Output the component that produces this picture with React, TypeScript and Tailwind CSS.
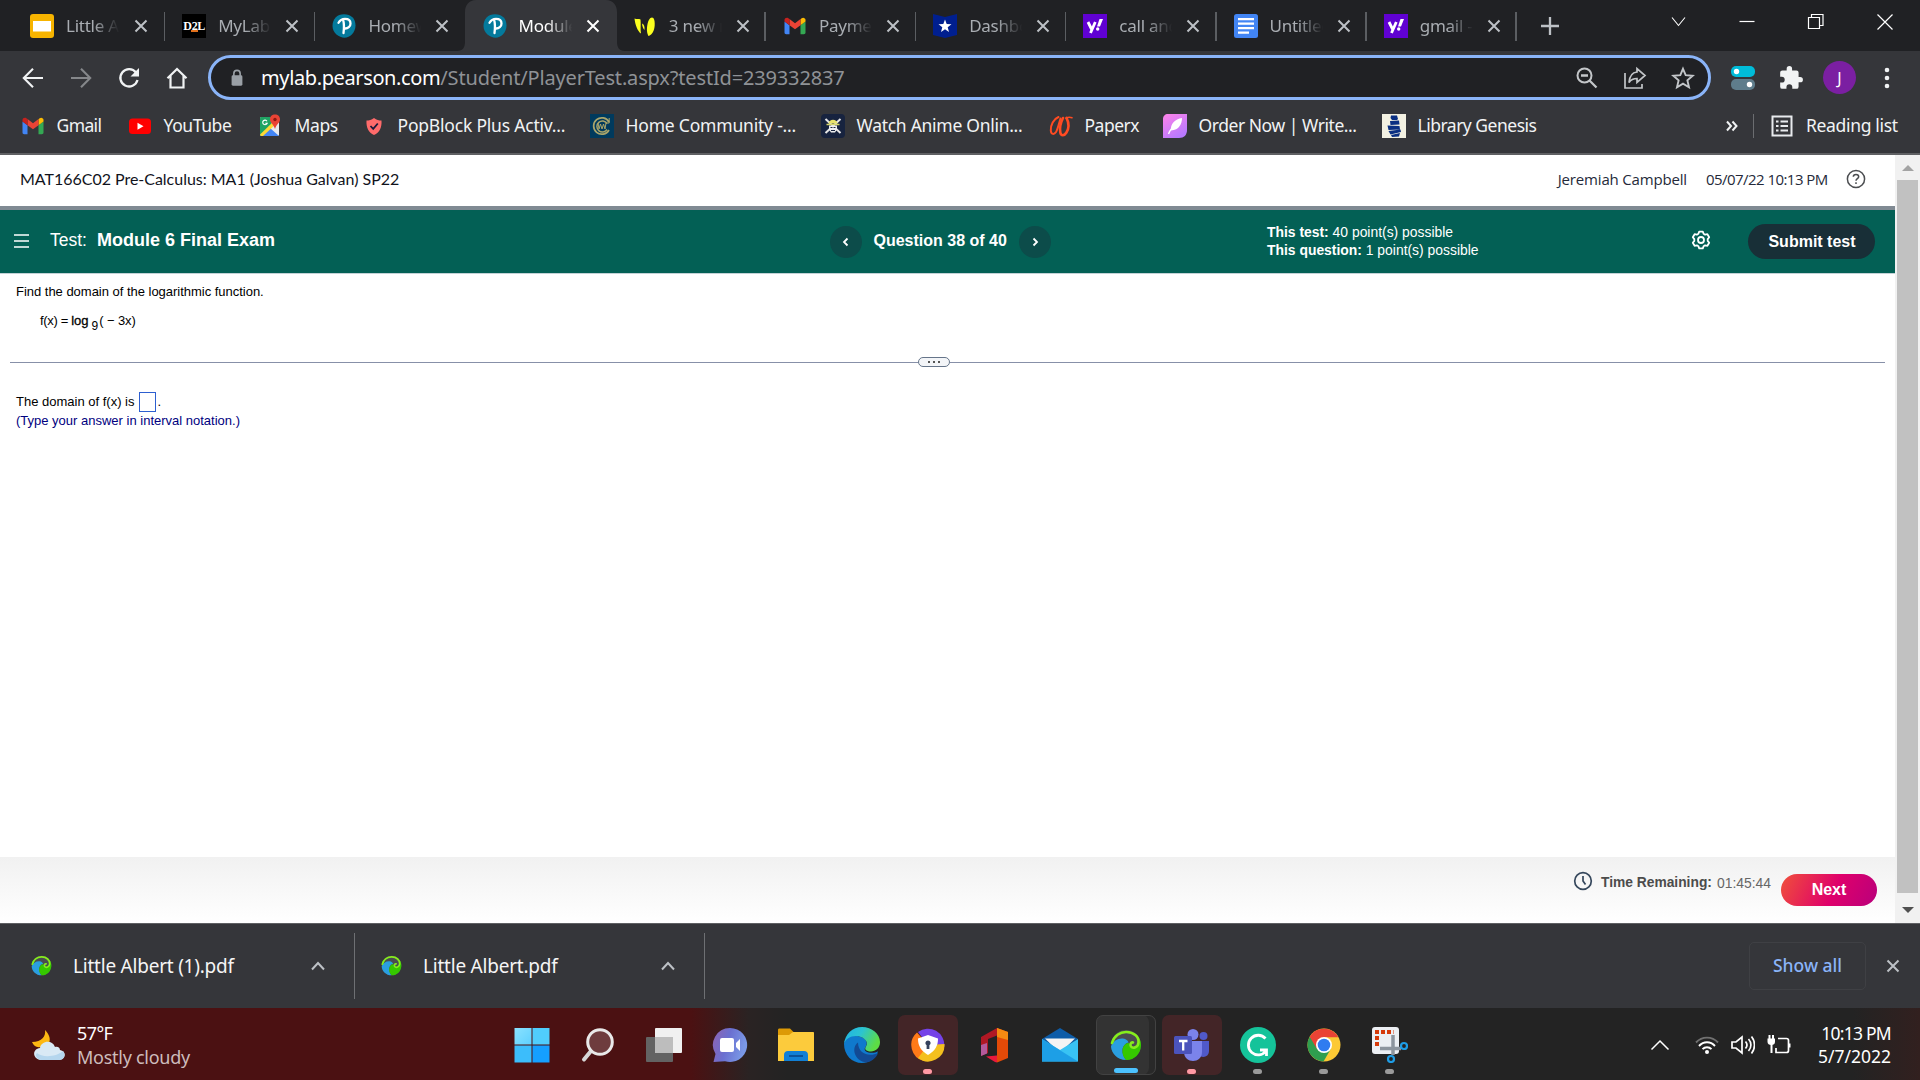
import React from 'react';

type IconProps = { className?: string };

const Close = ({ className = '' }: IconProps) => (
  <svg viewBox="0 0 14 14" className={className} stroke="currentColor" strokeWidth="2" fill="none">
    <path d="M1.5 1.5l11 11M12.5 1.5l-11 11" />
  </svg>
);

const Slides = () => (
  <svg viewBox="0 0 24 24" className="size-6">
    <rect width="24" height="24" rx="3" fill="#f7b400" />
    <rect x="3" y="7" width="18" height="10.5" fill="#fff" />
  </svg>
);

const D2L = () => (
  <div className="relative flex size-6 items-center justify-center overflow-visible bg-black">
    <span className="font-['Liberation_Serif',serif] text-[12px] leading-none font-bold tracking-[-0.3px] text-white">D2L</span>
    <span className="absolute top-[16px] left-[9px] h-[2px] w-[7px] bg-[#e0701c]" />
  </div>
);

const Pearson = () => (
  <svg viewBox="0 0 24 24" className="size-6">
    <path d="M12 .3C19 .3 23.500 4.500 23.500 11.500S18 23.700 12.500 23.700 .5 19 .5 12C.5 5 5 .3 12 .3z" fill="#047a9c" />
    <path d="M6.500 8.800C8 6 10.500 4.800 13 4.800c3.500 0 5.500 1.900 5.500 4.600 0 3.200-2.600 5.300-5.800 5.100M11.300 6.500c1 4 .8 8 .2 12.500" fill="none" stroke="#fff" strokeWidth="2.300" strokeLinecap="round" />
  </svg>
);

const YellowW = () => (
  <svg viewBox="0 0 24 24" className="size-6" fill="#fbff1f">
    <path d="M1.500 4.500c2 1 4.500 0 6 1 .6 4-.3 10 .5 14-3-1.500-6-9-6.500-15z" />
    <path d="M9 9.500c2 .5 2.800 3 2.500 6.500-1.200-1-2.200-3.500-2.500-6.500z" />
    <path d="M19 3.500c2 0 2.900 3 2.700 8-.3 5-3 10-6.200 10.500-3.300-5-1-18.500 3.500-18.500z" />
  </svg>
);

const Gmail = () => (
  <svg viewBox="0 0 24 24" className="size-6">
    <path d="M1.500 7.500v11c0 1 .7 1.700 1.700 1.700h3.300v-9z" fill="#4285f4" />
    <path d="M22.500 7.500v11c0 1-.7 1.700-1.700 1.700h-3.300v-9z" fill="#34a853" />
    <path d="M17.500 5.200v6l5-3.700V6c0-2-2.300-3-3.800-1.800z" fill="#fbbc04" />
    <path d="M6.500 11.200v-6.100L12 9.200l5.500-4.100v6.100L12 15.300z" fill="#ea4335" />
    <path d="M1.500 6v1.500l5 3.700V5.100L5.300 4.200C3.800 3.100 1.500 4.100 1.500 6z" fill="#c5221f" />
  </svg>
);

const StarBadge = () => (
  <svg viewBox="0 0 24 24" className="size-6">
    <path d="M0 0l12 3L24 0v21l-12 3L0 21z" fill="#001f8f" />
    <path d="M12 5.500l1.700 4.500 4.800.2-3.800 3 1.300 4.700-4-2.700-4 2.700 1.300-4.700-3.800-3 4.800-.2z" fill="#fff" />
  </svg>
);

const Yahoo = () => (
  <svg viewBox="0 0 24 24" className="size-6">
    <rect width="24" height="24" fill="#6001d2" />
    <path d="M5 8l3.500 7M12.300 8L7.500 19" stroke="#fff" strokeWidth="2.800" />
    <path d="M16.500 5h3.500l-3 7.500h-3z" fill="#fff" />
    <circle cx="14.700" cy="15" r="1.700" fill="#fff" />
  </svg>
);

const Docs = () => (
  <svg viewBox="0 0 24 24" className="size-6">
    <rect width="24" height="24" rx="2.500" fill="#4285f4" />
    <path d="M4 5.200h16M4 9.700h16M4 14.200h16M4 18.700h11" stroke="#fff" strokeWidth="2.300" />
  </svg>
);

const YouTube = () => (
  <svg viewBox="0 0 24 24" className="size-6">
    <rect x="1" y="4.500" width="22" height="15.500" rx="3.500" fill="#f00" />
    <path d="M9.500 8.800v7l6-3.500z" fill="#fff" />
  </svg>
);

const MapsIcon = () => (
  <svg viewBox="0 0 24 24" className="size-6">
    <rect x="1" y="3" width="19" height="19" rx="1.500" fill="#e8eaed" />
    <path d="M1 4.500C1 3.500 1.500 3 2.500 3H14l-2 10L1 22z" fill="#1fa463" />
    <path d="M3 22l8-8 9 8z" fill="#4285f4" />
    <path d="M1 20.500L14 8l2.500 2.500L4 22H1.800z" fill="#fdd835" />
    <path d="M16 .5c3 0 5 2 5 4.900 0 3.600-3.700 4.600-5 9.600-1.300-5-5-6-5-9.600C11 2.500 13 .5 16 .5z" fill="#ea4335" />
    <circle cx="16" cy="5.500" r="1.700" fill="#8c1a12" />
    <path d="M8 7.200a2.300 2.300 0 1 0 .2 2H6.300" fill="none" stroke="#fff" strokeWidth="1.100" />
  </svg>
);

const Shield = () => (
  <svg viewBox="0 0 24 24" className="size-6">
    <path d="M12 4c2.500 2 5 2.500 7.500 2.500.5 7-2 12-7.500 14.500-5.500-2.500-8-7.500-7.500-14.500C7 6.500 9.500 6 12 4z" fill="#ff6b6b" />
    <path d="M8.500 12l2.700 2.800L15.800 9.500" stroke="#1c1c3c" strokeWidth="1.800" fill="none" />
  </svg>
);

const Crest = () => (
  <svg viewBox="0 0 24 24" className="size-6">
    <rect width="24" height="24" fill="#003a5d" />
    <g fill="none" stroke="#a9a56b">
      <path d="M19 8A8.200 8.200 0 1 0 19 16" strokeWidth="1.700" />
      <path d="M17 9.500a5.500 5.500 0 1 0 0 6" strokeWidth="1.400" />
      <path d="M8 9l1 6 1.500-5 1.500 5 1.500-5 1.500 5 1-6" strokeWidth="1" />
      <path d="M19.200 4v5h-3" strokeWidth="1" />
    </g>
  </svg>
);

const Pirate = () => (
  <svg viewBox="0 0 24 24" className="size-6">
    <rect width="24" height="24" rx="4" fill="#17233f" />
    <path d="M4.500 5l15 14M19.500 5l-15 14" stroke="#e6e6e6" strokeWidth="2" />
    <path d="M7.500 9.500C8 4.500 16 4.500 16.500 9.500z" fill="#e9e36a" />
    <path d="M5.500 10.500h13" stroke="#d6d66a" strokeWidth="1.500" />
    <path d="M8 11.500h8v4l-2 3h-4l-2-3z" fill="#eee" />
    <path d="M9.500 13.500h2M12.500 13.500h2M10 16.500h4" stroke="#17233f" strokeWidth="1.200" />
  </svg>
);

const PaperxIcon = () => (
  <svg viewBox="0 0 24 24" className="size-6" fill="none" stroke="#ff4b22" strokeLinecap="round">
    <path d="M9.500 3C4.500 5 1.500 11 1.800 16.500c.3 4 3.200 4.500 5.200 1.500C9 14.500 10 9 11.500 4.500" strokeWidth="2" />
    <path d="M14 4c-2 4-3.500 10-2.700 14.500.7 3.700 4 3.500 6 .3 2.500-4 2.700-10 .2-15" strokeWidth="2.600" />
    <path d="M17 4.300c2-1.300 4-1.300 6-.6" strokeWidth="1.500" />
  </svg>
);

const Feather = () => (
  <svg viewBox="0 0 24 24" className="size-6">
    <defs>
      <linearGradient id="feather" x1="0" y1="0" x2=".6" y2="1">
        <stop stopColor="#ff83e8" />
        <stop offset="1" stopColor="#b879ff" />
      </linearGradient>
    </defs>
    <path d="M5 0h19v16c0 5-3 8-8 8H0V5c0-3 2-5 5-5z" fill="url(#feather)" />
    <path d="M19 4c0 6-3 12-11 12.500C7 10 12 5 19 4z" fill="#fff" />
    <path d="M15 8C10 12 7 16 5.500 20" stroke="#fff" strokeWidth="1.400" fill="none" />
  </svg>
);

const LibGen = () => (
  <svg viewBox="0 0 24 24" className="size-6">
    <rect width="24" height="24" fill="#f3f1e2" />
    <path d="M9 1.500h6l1 3.500-1 1h-5L8.500 4zM8 7l9-.5.500 4L8.500 11zM5.500 11.500l12 .5.500 3.500-11.500.5zM6.500 17l12-1.500.5 2.500-10.500 2.500zM9 21l9-2-1 3.500-7 .5z" fill="#0a2f82" />
  </svg>
);

const tabs = [
  { t: 'Little A', icon: <Slides />, sep: true },
  { t: 'MyLab', icon: <D2L />, sep: true },
  { t: 'Homew', icon: <Pearson />, sep: false },
  { t: 'Module', icon: <Pearson />, sep: false, active: true },
  { t: '3 new m', icon: <YellowW />, sep: true },
  { t: 'Payme', icon: <Gmail />, sep: true },
  { t: 'Dashbo', icon: <StarBadge />, sep: true },
  { t: 'call and', icon: <Yahoo />, sep: true },
  { t: 'Untitled', icon: <Docs />, sep: true },
  { t: 'gmail - ', icon: <Yahoo />, sep: true },
];

const TabStrip = () => (
  <div className="flex h-[51px] shrink-0 items-center bg-[#202124] pl-[15px]">
    {tabs.map((x, i) => (
      <div
        key={x.t}
        className={`relative flex h-[51px] w-[150.2px] shrink-0 items-center ${i ? 'pl-[17px]' : 'pl-[15px]'} ${x.active ? 'text-white' : 'text-[#a9adb2]'}`}
      >
        {x.active && (
          <svg viewBox="0 0 168 51" className="absolute top-0 -left-[9px] h-[51px] w-[168px]">
            <path d="M0 51c6 0 8-4 8-9V12C8 5 12 0 19 0H149c7 0 11 5 11 12v30c0 5 2 9 8 9z" fill="#35363a" />
          </svg>
        )}
        <div className="relative flex size-6 items-center">{x.icon}</div>
        <div className="relative ml-3 w-[55px] overflow-hidden whitespace-pre text-[17px] tracking-[-0.25px] [mask-image:linear-gradient(to_right,#000_50%,transparent_97%)]">
          {x.t}
        </div>
        <Close className={`relative size-[14px] ${i ? 'ml-[12px]' : 'ml-[13px]'} ${x.active ? 'text-white' : 'text-[#bdc1c6]'}`} />
        {x.sep && <div className="absolute top-[12px] right-0 h-[29px] w-[1.5px] bg-[#5b5e62]" />}
      </div>
    ))}
    <svg viewBox="0 0 20 20" className="ml-[23px] size-5 text-[#bdc1c6]" stroke="currentColor" strokeWidth="2.300">
      <path d="M10 1v18M1 10h18" />
    </svg>
    <div className="ml-auto flex h-full items-start gap-[49px] pt-[12px] pr-[25px] text-white">
      <svg viewBox="0 0 20 20" className="size-5" fill="none" stroke="currentColor" strokeWidth="1.100">
        <path d="M4 5.500l6.500 8 6.500-8" />
      </svg>
      <svg viewBox="0 0 20 20" className="size-5" stroke="currentColor" strokeWidth="1.200">
        <path d="M2.500 9.500h15" />
      </svg>
      <svg viewBox="0 0 20 20" className="size-5" fill="none" stroke="currentColor" strokeWidth="1.200">
        <path d="M2.500 5.500h11v11h-11zM5.500 5.500v-3h11.500v11h-3.500" />
      </svg>
      <svg viewBox="0 0 20 20" className="size-5" stroke="currentColor" strokeWidth="1.200">
        <path d="M2.500 2.500l15 15M17.500 2.500l-15 15" />
      </svg>
    </div>
  </div>
);

const Toolbar = () => (
  <div className="flex h-[52px] shrink-0 items-center pt-px">
    <div className="flex w-[208px] items-center gap-[24px] pl-[21px] text-[#f1f3f4]">
      <svg viewBox="0 0 24 24" className="size-6" fill="none" stroke="currentColor" strokeWidth="2.100">
        <path d="M22 12H3M12 2.800L2.800 12l9.200 9.200" />
      </svg>
      <svg viewBox="0 0 24 24" className="size-6 text-[#85878a]" fill="none" stroke="currentColor" strokeWidth="2.100">
        <path d="M2 12h19M12 2.800l9.200 9.200-9.200 9.200" />
      </svg>
      <svg viewBox="0 0 24 24" className="size-6" fill="none" stroke="currentColor" strokeWidth="2.300">
        <path d="M19 6.500A8.700 8.700 0 1 0 20.500 14" />
        <path d="M22 2v8.500h-8.500z" fill="currentColor" stroke="none" />
      </svg>
      <svg viewBox="0 0 24 24" className="size-6" fill="none" stroke="currentColor" strokeWidth="2.200">
        <path d="M2.500 12.300L12 3l9.500 9.300M5.500 10v11.500h13V10" />
      </svg>
    </div>
    <div className="flex h-[45px] w-[1503px] items-center rounded-full border-[3px] border-[#8ab4f8] bg-[#202124] pr-[13px] pl-[18px]">
      <svg viewBox="0 0 16 20" className="h-[18px] w-4 text-[#9aa0a6]">
        <rect x="2" y="7" width="12" height="11.500" rx="1.500" fill="currentColor" />
        <path d="M4.500 8V5a3.500 3.500 0 0 1 7 0v3" fill="none" stroke="currentColor" strokeWidth="1.800" />
      </svg>
      <div className="ml-[16px] flex whitespace-nowrap text-[20px]">
        <span className="tracking-[-0.38px] text-white">mylab.pearson.com</span>
        <span className="tracking-[-0.16px] text-[#8f9296]">/Student/PlayerTest.aspx?testId=239332837</span>
      </div>
      <div className="ml-auto flex items-center gap-[24px] text-[#c3c6c9]">
        <svg viewBox="0 0 24 24" className="size-6" fill="none" stroke="currentColor" strokeWidth="2">
          <circle cx="9.500" cy="9.500" r="7" />
          <path d="M14.500 14.500l7 7M6 9.500h7" strokeWidth="2.300" />
        </svg>
        <svg viewBox="0 0 24 24" className="size-6" fill="none" stroke="currentColor" strokeWidth="1.700">
          <path d="M2 7v15h17v-4M14 6V2.500l8 7-8 7V12.500c-4 0-6 1-8 4 .5-6 3-10 8-10.500z" />
        </svg>
        <svg viewBox="0 0 24 24" className="size-6" fill="none" stroke="currentColor" strokeWidth="1.900">
          <path d="M12 2.800l2.700 6.400 7 .6-5.300 4.600 1.600 6.800-6-3.600-6 3.600 1.600-6.800-5.300-4.600 7-.6z" />
        </svg>
      </div>
    </div>
    <div className="flex flex-1 items-center pl-[20px]">
      <svg viewBox="0 0 24 24" className="size-6">
        <rect width="24" height="11" rx="5" fill="#00bcd9" />
        <rect y="13" width="24" height="11" rx="5" fill="#5f7d8c" />
        <circle cx="5.500" cy="5.500" r="2.700" fill="#fff" />
        <circle cx="18.500" cy="18.500" r="2.700" fill="#fff" />
      </svg>
      <svg viewBox="0 0 24 24" className="ml-[23px] size-[26px]" fill="#f1f3f4">
        <path d="M20.500 11H19V7a2 2 0 0 0-2-2h-4V3.500a2.500 2.500 0 0 0-5 0V5H4a2 2 0 0 0-2 2v3.800h1.500a2.700 2.700 0 0 1 0 5.400H2V20a2 2 0 0 0 2 2h3.800v-1.500a2.700 2.700 0 0 1 5.400 0V22H17a2 2 0 0 0 2-2v-4h1.500a2.500 2.500 0 0 0 0-5z" />
      </svg>
      <div className="ml-[19px] flex size-[33px] items-center justify-center rounded-full bg-[#7b1fa2] text-[16px] text-white">J</div>
      <svg viewBox="0 0 6 22" className="ml-[28px] h-[22px] w-[6px]" fill="#f1f3f4">
        <circle cx="3" cy="3" r="2.300" />
        <circle cx="3" cy="11" r="2.300" />
        <circle cx="3" cy="19" r="2.300" />
      </svg>
    </div>
  </div>
);

const bookmarks = [
  { t: 'Gmail', w: 'w-[107px]', s: 'tracking-[-0.6px]', icon: <Gmail /> },
  { t: 'YouTube', w: 'w-[131px]', s: 'tracking-[-0.4px]', icon: <YouTube /> },
  { t: 'Maps', w: 'w-[103px]', s: 'tracking-[-0.4px]', icon: <MapsIcon /> },
  { t: 'PopBlock Plus Activ...', w: 'w-[228px]', s: 'tracking-[-0.2px]', icon: <Shield /> },
  { t: 'Home Community -...', w: 'w-[231px]', s: 'tracking-[-0.2px]', icon: <Crest /> },
  { t: 'Watch Anime Onlin...', w: 'w-[228px]', s: 'tracking-[-0.28px]', icon: <Pirate /> },
  { t: 'Paperx', w: 'w-[114px]', s: 'tracking-[-0.5px]', icon: <PaperxIcon /> },
  { t: 'Order Now | Write...', w: 'w-[219px]', s: 'tracking-[-0.45px]', icon: <Feather /> },
  { t: 'Library Genesis', w: 'w-[180px]', s: 'tracking-[-0.5px]', icon: <LibGen /> },
];

const BookmarkBar = () => (
  <div className="flex h-[50px] shrink-0 items-center pb-[4px] pl-[21px] text-[17.500px] text-[#f1f3f4]">
    {bookmarks.map((b) => (
      <div key={b.t} className={`flex shrink-0 items-center gap-[11.500px] whitespace-nowrap ${b.w} ${b.s}`}>
        {b.icon}
        <span className="-mt-[2px]">{b.t}</span>
      </div>
    ))}
    <div className="ml-auto flex items-center pr-[22px]">
      <svg viewBox="0 0 12 12" className="size-3" fill="none" stroke="#f1f3f4" strokeWidth="2">
        <path d="M1 1.500L5 6l-4 4.500M6.500 1.500l4 4.500-4 4.500" />
      </svg>
      <div className="ml-[15px] h-[24px] w-px bg-[#6b6d70]" />
      <svg viewBox="0 0 24 24" className="ml-[16px] size-6" fill="none" stroke="#e8eaed" strokeWidth="2">
        <path d="M2.500 2.500h19v19h-19z" />
        <path d="M6 7.500h2.500M10.500 7.500H18M6 12h2.500M10.500 12H18M6 16.500h2.500M10.500 16.500H18" />
      </svg>
      <span className="-mt-[2px] ml-[12px] w-[92px] whitespace-nowrap tracking-[-0.33px]">Reading list</span>
    </div>
  </div>
);

const PageHeader = () => (
  <div className="flex h-[51px] shrink-0 items-center pr-[29px] pb-1 pl-[20px] text-[#11131c]">
    <span className="font-['Lato',sans-serif] text-[16px] tracking-[-0.02px]">MAT166C02 Pre-Calculus: MA1 (Joshua Galvan) SP22</span>
    <div className="ml-auto flex items-center pt-px font-['Open_Sans',sans-serif] text-[15px] text-[#252a3a]">
      <span className="mr-[19px] tracking-[-0.17px]">Jeremiah Campbell</span>
      <span className="w-[122px] whitespace-nowrap tracking-[-0.55px]">05/07/22 10:13 PM</span>
      <svg viewBox="0 0 20 20" className="ml-[18px] size-5" fill="none" stroke="#4b4d50" strokeWidth="1.500">
        <circle cx="10" cy="10" r="8.600" />
        <path d="M7.300 7.800c0-3.200 5.400-3.200 5.400 0 0 1.900-2.700 1.900-2.700 4M10 13.300v1.700" />
      </svg>
    </div>
  </div>
);

const RoundArrow = ({ d }: { d: string }) => (
  <div className="flex size-[32px] items-center justify-center rounded-full bg-[#0c4c4a]">
    <svg viewBox="0 0 10 10" className="size-[10px]" fill="none" stroke="#fff" strokeWidth="1.800">
      <path d={d} />
    </svg>
  </div>
);

const TestBar = () => (
  <div className="flex h-[68px] shrink-0 items-center border-t-[4px] border-b border-t-[#808a93] border-b-[#c3d2d6] bg-[#036055] font-['Liberation_Sans',Arial,sans-serif] text-white">
    <div className="flex w-[830px] items-center pl-[14px]">
      <svg viewBox="0 0 15 14" className="mb-[2px] h-[14px] w-[15px]" stroke="#fff" strokeWidth="1.500">
        <path d="M0 1h15M0 7h15M0 13h15" />
      </svg>
      <span className="mb-[2px] ml-[21px] w-[47px] text-[17.500px]">Test:</span>
      <span className="mb-[2px] text-[18px] font-bold">Module 6 Final Exam</span>
    </div>
    <div className="flex w-[437px] items-center">
      <RoundArrow d="M6.500 1.500L3 5l3.500 3.500" />
      <span className="mx-[11.500px] mb-[2px] w-[134px] whitespace-nowrap text-[16px] font-bold">Question 38 of 40</span>
      <RoundArrow d="M3.500 1.500L7 5 3.500 8.500" />
    </div>
    <div className="w-[424px] pb-[1px] text-[13.900px] leading-[18px]">
      <div><b>This test:</b> 40 point(s) possible</div>
      <div><b>This question:</b> 1 point(s) possible</div>
    </div>
    <svg viewBox="0 0 20 20" className="mb-[3px] size-5" fill="none" stroke="#fff" strokeWidth="1.800" strokeLinejoin="round">
      <circle cx="10" cy="10" r="3" />
      <path d="M8.200 1.600h3.600l.8 2.200 1.500.9 2.300-.5 1.800 3-1.500 1.900v1.800l1.500 1.900-1.800 3-2.300-.5-1.500.9-.8 2.200H8.200l-.8-2.200-1.500-.9-2.300.5-1.800-3 1.500-1.900V9.100L1.800 7.200l1.800-3 2.300.5 1.500-.9z" />
    </svg>
    <div className="ml-[37px] flex h-[35px] w-[127px] items-center justify-center rounded-full bg-[#182f37] pl-px text-[16px] font-bold whitespace-nowrap">Submit test</div>
  </div>
);

const Question = () => (
  <div className="flex flex-1 flex-col font-['Liberation_Sans',Arial,sans-serif] text-[13px] text-black">
    <div className="mt-[10px] ml-[16px] h-[16px] leading-[16px] tracking-[-0.02px]">Find the domain of the logarithmic function.</div>
    <div className="mt-[12px] ml-[40px] flex h-[22px] leading-[18px] whitespace-pre">
      <span className="tracking-[-0.35px]">f(x) = </span>
      <span className="[-webkit-text-stroke:0.3px_#000]">log</span>
      <span className="mt-[5px] ml-[3px] text-[12px]">9</span>
      <span className="ml-px tracking-[-0.1px]">( − 3x)</span>
    </div>
    <div className="mt-[23px] flex h-[10px] items-center pr-[10px] pl-[10px]">
      <div className="h-px w-[908px] bg-[#8790a8]" />
      <div className="flex h-[10px] w-[32px] items-center justify-center gap-[3px] rounded-full border border-[#66758a] bg-[#f3f5f8]">
        <i className="size-[2px] bg-[#555]" />
        <i className="size-[2px] bg-[#555]" />
        <i className="size-[2px] bg-[#555]" />
      </div>
      <div className="h-px flex-1 bg-[#8790a8]" />
    </div>
    <div className="mt-[25px] ml-[16px] flex h-[20px] items-center">
      <span className="w-[122.500px] whitespace-nowrap">The domain of f(x) is</span>
      <span className="h-[20px] w-[17px] border border-[#2d5fd0]" />
      <span className="ml-[2px]">.</span>
    </div>
    <div className="ml-[16px] h-[18px] leading-[17px] text-[#000080]">(Type your answer in interval notation.)</div>
  </div>
);

const FooterBar = () => (
  <div className="flex h-[66px] shrink-0 items-start bg-linear-to-b from-[#f1f1f1] to-white pr-[18px] font-['Liberation_Sans',Arial,sans-serif]">
    <svg viewBox="0 0 20 20" className="mt-[14px] ml-auto size-[20px]" fill="none" stroke="#35475c" strokeWidth="1.700">
      <circle cx="10" cy="10" r="8.300" />
      <path d="M10 5v5l2.500 3.500" />
    </svg>
    <span className="mt-[15.500px] ml-[8px] w-[116px] text-[13.800px] leading-[20px] font-bold whitespace-nowrap text-[#4c4c4c]">Time Remaining:</span>
    <span className="mt-[16px] w-[64px] text-[13.900px] leading-[20px] text-[#666]">01:45:44</span>
    <div className="mt-[17px] flex h-[32px] w-[96px] items-center justify-center rounded-full bg-linear-[115deg,#f0503a_0%,#df006b_55%,#b8007c_100%] text-[16px] font-bold text-white">Next</div>
  </div>
);

const Scrollbar = () => (
  <div className="flex w-[25px] shrink-0 flex-col items-center bg-[#f1f1f1]">
    <svg viewBox="0 0 12 6" className="mt-[10px] h-[6px] w-[12px]" fill="#a3a3a3">
      <path d="M6 0l6 6H0z" />
    </svg>
    <div className="mt-[9px] h-[713px] w-[21px] bg-[#c1c1c1]" />
    <svg viewBox="0 0 12 6" className="mt-[14px] h-[6px] w-[12px]" fill="#505050">
      <path d="M0 0h12L6 6z" />
    </svg>
  </div>
);

const Swirl = ({ className = '' }: IconProps) => (
  <svg viewBox="0 0 32 32" className={className}>
    <circle cx="16" cy="16" r="15" fill="#4a4c50" />
    <path d="M1 17.500C3 12 8 9 13 9.500c3 .4 5 2 5.500 4-3 .5-5.500 3.500-6 7-.4 4 1 7 3.500 10.500C8 31 1.500 25 1 17.500z" fill="#2a9fe0" />
    <path d="M12.500 21c.5-4.500 3.500-7.500 6.500-7 0 4 4 6 7.300 3.500 4-3 2.700-8.500-.3-11.500 3.500 2.500 5.500 6.500 5 11C30.500 25 24 31.500 16 31c-2.500-3-4-6-3.500-10z" fill="#35c800" />
    <path d="M2 14C4 7 10 2.800 16.500 3c7 .2 12.500 4.500 12 10.500-.4 5-5.500 6.500-7.500 4-1.500-2 0-4.500 2-4" fill="none" stroke="#86ee1c" strokeWidth="2.600" strokeLinecap="round" />
  </svg>
);

const Download = ({ name, w, pad }: { name: string; w: string; pad: string }) => (
  <div className={`flex h-[66px] items-center border-r border-[#6e7073] text-[#f5f5f5] ${w} ${pad}`}>
    <Swirl className="mb-[2px] size-[21px]" />
    <span className="mt-px ml-[21px] w-[238px] text-[19px] tracking-[-0.22px]">{name}</span>
    <svg viewBox="0 0 14 10" className="h-[10px] w-[14px]" fill="none" stroke="#bdc1c6" strokeWidth="2">
      <path d="M1 8.500L7 2l6 6.500" />
    </svg>
  </div>
);

const DownloadBar = () => (
  <div className="flex h-[85px] shrink-0 items-center border-t border-[#5f6063] bg-[#35363a]">
    <Download name="Little Albert (1).pdf" w="w-[355px]" pad="pl-[31px]" />
    <Download name="Little Albert.pdf" w="w-[350px]" pad="pl-[26px]" />
    <div className="ml-auto flex h-[48px] w-[117px] items-center justify-center rounded-[5px] border border-[#3f4044] pb-[2px] text-[17.500px] font-medium text-[#8ab4f8]">Show all</div>
    <Close className="mr-[20px] ml-[20px] size-[14px] text-[#bdc1c6]" />
  </div>
);

const StartIcon = () => (
  <svg viewBox="0 0 36 36" className="size-9">
    <defs>
      <linearGradient id="win" x1="0" y1="0" x2="1" y2="1">
        <stop stopColor="#8ae2ff" />
        <stop offset="1" stopColor="#5fd0ff" />
      </linearGradient>
    </defs>
    <path d="M.5 1h17v16.500H.5z" fill="url(#win)" />
    <path d="M18.500 1h17v16.500h-17z" fill="#50cdfc" />
    <path d="M.5 18.500h17v17H.5z" fill="#3cbdfb" />
    <path d="M18.500 18.500h17v17h-17z" fill="#159fff" />
  </svg>
);

const SearchIcon = () => (
  <svg viewBox="0 0 36 36" className="size-9">
    <path d="M11 24l-7 8.500" stroke="#d7d7d7" strokeWidth="4" strokeLinecap="round" />
    <circle cx="20" cy="15" r="12.300" fill="#6e3c3e" stroke="#e9e9e9" strokeWidth="3" />
  </svg>
);

const TaskView = () => (
  <svg viewBox="0 0 36 36" className="size-9">
    <rect y="10" width="27" height="25" rx="1" fill="#636363" />
    <rect x="9" y="1" width="27" height="25" rx="1" fill="#f0f0f0" />
    <path d="M9 10h18v16H9z" fill="#bdbdbd" />
  </svg>
);

const Chat = () => (
  <svg viewBox="0 0 36 36" className="size-9">
    <defs>
      <linearGradient id="chat" x1="0" y1="0" x2="1" y2=".3">
        <stop stopColor="#8f63b0" />
        <stop offset=".5" stopColor="#6a6fd0" />
        <stop offset="1" stopColor="#7a98e6" />
      </linearGradient>
    </defs>
    <path d="M18 1a17 17 0 1 1-5 33.200L1.500 35l2-8A17 17 0 0 1 18 1z" fill="url(#chat)" />
    <rect x="8" y="11" width="14" height="14" rx="2" fill="#fff" />
    <path d="M24 16l4-4v12l-4-4z" fill="#fff" />
  </svg>
);

const Folder = () => (
  <svg viewBox="0 0 36 36" className="size-9">
    <path d="M0 3c0-1 .6-1.500 1.500-1.500H12l4 4V12H0z" fill="#dd9a05" />
    <path d="M0 8h11l4-3h20c.7 0 1 .4 1 1v28H0z" fill="#fccb3c" />
    <path d="M6 34v-6c0-2.500 1.500-4 4-4h16c2.500 0 4 1.500 4 4v6z" fill="#1180d6" />
    <path d="M11 29h14" stroke="#0b4f94" strokeWidth="1.800" />
  </svg>
);

const Edge = () => (
  <svg viewBox="0 0 36 36" className="size-9">
    <defs>
      <linearGradient id="edge" x1="0" y1="0" x2="1" y2=".4">
        <stop stopColor="#1eb1e7" />
        <stop offset=".5" stopColor="#2cc4d0" />
        <stop offset="1" stopColor="#5ddc45" />
      </linearGradient>
    </defs>
    <path d="M0 17C1 9 8 8 13 9c8 1 12 6 8.500 11-1.500 2-1 4.500 3 5.500 4 .8 7 .2 9.500-1.200C32 31 26 36 18 36 8 36 0 28 0 17z" fill="#0f79cd" />
    <path d="M0 17C1 7 8.500 0 18 0c10 0 18 7 18 15 0 6-4.500 9.500-9 9.500-5 0-7-2.500-5-5 3.500-5-3-10.500-10-10.500C6 9 1.500 12 0 17z" fill="url(#edge)" />
    <path d="M14 15.500c-7 5-4 18.500 8.500 20 5.500-1 10-5 11.500-9.500-9 4.500-20 .5-20-10.500z" fill="#124a94" />
  </svg>
);

const Avast = () => (
  <svg viewBox="0 0 36 36" className="size-9">
    <path d="M18 18L7 5.500A16.500 16.500 0 0 0 14 34z" fill="#ff7a18" />
    <path d="M18 18L8 5A16.500 16.500 0 0 1 34.300 20z" fill="#7542e8" />
    <path d="M18 18l16.500-1A16.500 16.500 0 0 1 8 31z" fill="#f4c01e" />
    <path d="M18 8l10 3.500c0 7-2.500 12-10 16.500C10.500 23.500 8 18.500 8 11.500z" fill="#fff" />
    <path d="M18 13.500a2.600 2.600 0 0 1 1.400 4.800V22h-2.800v-3.700a2.600 2.600 0 0 1 1.400-4.800z" fill="#34405c" />
  </svg>
);

const Office = () => (
  <svg viewBox="0 0 36 36" className="size-9">
    <path d="M5 10L21 1v7.500L12 12v14l-7 3z" fill="#b01824" />
    <path d="M5 18l6-2v10.500L5 29z" fill="#b45a9b" />
    <path d="M21 1l11 4v26l-11 4.500z" fill="#e34a08" />
    <path d="M21 1l11 4v8l-11-3z" fill="#f58a12" />
    <path d="M10 29.500l11-1v7L19 35z" fill="#e8193c" />
  </svg>
);

const Mail = () => (
  <svg viewBox="0 0 36 36" className="size-9">
    <path d="M0 12L18 1l18 11-18 12z" fill="#0d5ca8" />
    <path d="M3 11.500h30L18 26z" fill="#f4f4f4" />
    <path d="M0 12l18 11L36 12v22.500H0z" fill="#38c3f4" />
    <path d="M0 34.500V12l36 22.500z" fill="#1d9fe6" />
  </svg>
);

const Teams = () => (
  <svg viewBox="0 0 36 36" className="size-9">
    <circle cx="19" cy="7.500" r="5.500" fill="#7b83eb" />
    <circle cx="29.500" cy="9" r="4" fill="#5059c9" />
    <path d="M22 14h13v10c0 7-9 8-11 2z" fill="#5059c9" />
    <path d="M10 14h18v11c0 12-18 12-18 0z" fill="#7b83eb" />
    <rect y="9" width="18" height="18" rx="1.500" fill="#4b53bc" />
    <path d="M5 14h8.500M9.200 14v9.500" stroke="#fff" strokeWidth="2.300" />
  </svg>
);

const Grammarly = () => (
  <svg viewBox="0 0 36 36" className="size-9">
    <circle cx="18" cy="18" r="18" fill="#15c39a" />
    <path d="M25.500 11.500A9.800 9.800 0 1 0 26 24M20 23h6.500v6" fill="none" stroke="#fff" strokeWidth="2.800" />
  </svg>
);

const Chrome = () => (
  <svg viewBox="0 0 36 36" className="size-9">
    <circle cx="18" cy="18" r="16.500" fill="#fcc934" />
    <path d="M18 18L3.700 9.700A16.500 16.500 0 0 0 17.500 34.500l7-12z" fill="#2f9e4f" />
    <path d="M18 10.200h14.300A16.500 16.500 0 0 0 3.700 9.700L11 22z" fill="#ea4335" />
    <circle cx="18" cy="18" r="8" fill="#fff" />
    <circle cx="18" cy="18" r="6.300" fill="#2f7cf0" />
  </svg>
);

const Snip = () => (
  <svg viewBox="0 0 36 36" className="size-9">
    <rect width="27" height="27" rx="3" fill="#eceff3" />
    <path d="M3 5h18.500M5 9v11" stroke="#d63a0a" strokeWidth="4" strokeDasharray="4 2" />
    <path d="M21 8v20M8 21.500h21" stroke="#8d959e" strokeWidth="3.500" />
    <circle cx="32" cy="19" r="3" fill="none" stroke="#1e9de6" strokeWidth="2.200" />
    <circle cx="19" cy="32" r="3" fill="none" stroke="#1e9de6" strokeWidth="2.200" />
  </svg>
);

const apps = [
  { id: 'start', icon: <StartIcon />, box: '', dot: '' },
  { id: 'search', icon: <SearchIcon />, box: '', dot: '' },
  { id: 'tasks', icon: <TaskView />, box: '', dot: '' },
  { id: 'chat', icon: <Chat />, box: '', dot: '' },
  { id: 'files', icon: <Folder />, box: '', dot: '' },
  { id: 'edge', icon: <Edge />, box: '', dot: '' },
  { id: 'avast', icon: <Avast />, box: 'bg-[#432527]', dot: 'w-[9px] bg-[#ff99a4]' },
  { id: 'office', icon: <Office />, box: '', dot: '' },
  { id: 'mail', icon: <Mail />, box: '', dot: '' },
  { id: 'browser', icon: <Swirl className="size-8" />, box: 'border border-[#424242] bg-[#333] shadow-[inset_-7px_0_0_-1px_#292929]', dot: 'w-[24px] bg-[#4cc2ff]' },
  { id: 'teams', icon: <Teams />, box: 'bg-[#432527]', dot: 'w-[9px] bg-[#ff99a4]' },
  { id: 'grammarly', icon: <Grammarly />, box: '', dot: 'w-[9px] bg-[#9a9a9a]' },
  { id: 'chrome', icon: <Chrome />, box: '', dot: 'w-[9px] bg-[#9a9a9a]' },
  { id: 'snip', icon: <Snip />, box: '', dot: 'w-[9px] bg-[#9a9a9a]' },
];

const Taskbar = () => (
  <div className="flex h-[72px] shrink-0 items-center bg-linear-[to_right,#4b1112_0%,#4b1112_36%,#2a2323_39%,#232323_41%,#232323_96.500%,#32201f_100%] pt-[2px] text-white">
    <div className="flex w-[498.500px] items-center pl-[30px]">
      <svg viewBox="0 0 36 36" className="size-9">
        <path d="M15 3c1 6-3 12-13 12 2 5 7 6 11 5 7-1 10-9 2-17z" fill="#fdb813" />
        <path d="M11 33c-9-1-9-11-1-12 1-7 12-9 15-1 3-1 5 1 5 3 7 1 6 10-1 10z" fill="#d9e9f5" />
        <path d="M11 33c-5-1-6-5-4-7 4 4 18 5 26-2 3 4 1 9-4 9z" fill="#b5d6ee" />
      </svg>
      <div className="ml-[11px] text-[18px] leading-[24px]">
        <div className="tracking-[-0.6px]">57°F</div>
        <div className="tracking-[-0.27px] text-[#cdbcbc]">Mostly cloudy</div>
      </div>
    </div>
    {apps.map((a) => (
      <div key={a.id} className="flex w-[66px] shrink-0 justify-center">
        <div className={`relative flex size-[60px] items-center justify-center rounded-[7px] ${a.box}`}>
          {a.icon}
          {a.dot && <span className={`absolute bottom-px h-[5px] rounded-full ${a.dot}`} />}
        </div>
      </div>
    ))}
    <div className="ml-auto flex items-center pr-[29px]">
      <svg viewBox="0 0 20 12" className="mr-[25px] h-3 w-5" fill="none" stroke="#fff" strokeWidth="1.500">
        <path d="M1.500 10.500L10 2l8.500 8.500" />
      </svg>
      <svg viewBox="0 0 24 20" className="h-5 w-6" fill="none" stroke="#fff" strokeWidth="1.900">
        <path d="M1 7.500c6-6.500 16-6.500 22 0" stroke="#707070" />
        <path d="M4 11c4.500-5 11.500-5 16 0M7.500 14.200c2.500-2.700 6.500-2.700 9 0" />
        <circle cx="12" cy="17" r="2" fill="#fff" stroke="none" />
      </svg>
      <svg viewBox="0 0 24 20" className="ml-[12px] h-5 w-6" fill="none" stroke="#fff" strokeWidth="1.700">
        <path d="M1 7h4l6-5v16l-6-5H1zM14.500 6.500c1.700 2 1.700 5 0 7M17.500 4c3.200 3.500 3.200 8.500 0 12M20.500 1.500c4 5 4 12 0 17" />
      </svg>
      <svg viewBox="0 0 24 20" className="ml-[12px] h-5 w-6" fill="none" stroke="#fff" strokeWidth="1.700">
        <path d="M11 3.500h8.500a2 2 0 0 1 2 2v10a2 2 0 0 1-2 2H9V13" />
        <path d="M22.500 8.500v4M2.500 0v4M6 0v4M4.500 8v10" strokeWidth="2" />
        <path d="M.5 3.500H8V7c0 2-1.500 3-3.700 3S.5 9 .5 7z" fill="#fff" stroke="none" />
      </svg>
      <div className="-mt-px ml-[25px] w-[75px] text-right text-[17.500px] leading-[23px] whitespace-nowrap">
        <div className="tracking-[-0.75px]">10:13 PM</div>
        <div>5/7/2022</div>
      </div>
    </div>
  </div>
);

export default function App() {
  return (
    <div className="flex h-[1080px] w-[1920px] flex-col overflow-hidden bg-[#35363a] font-['Noto_Sans',sans-serif]">
      <TabStrip />
      <Toolbar />
      <BookmarkBar />
      <div className="h-[2px] shrink-0 bg-[#5f6063]" />
      <div className="flex h-[768px] shrink-0 bg-white">
        <div className="flex min-w-0 flex-1 flex-col">
          <PageHeader />
          <TestBar />
          <Question />
          <FooterBar />
        </div>
        <Scrollbar />
      </div>
      <DownloadBar />
      <Taskbar />
    </div>
  );
}
